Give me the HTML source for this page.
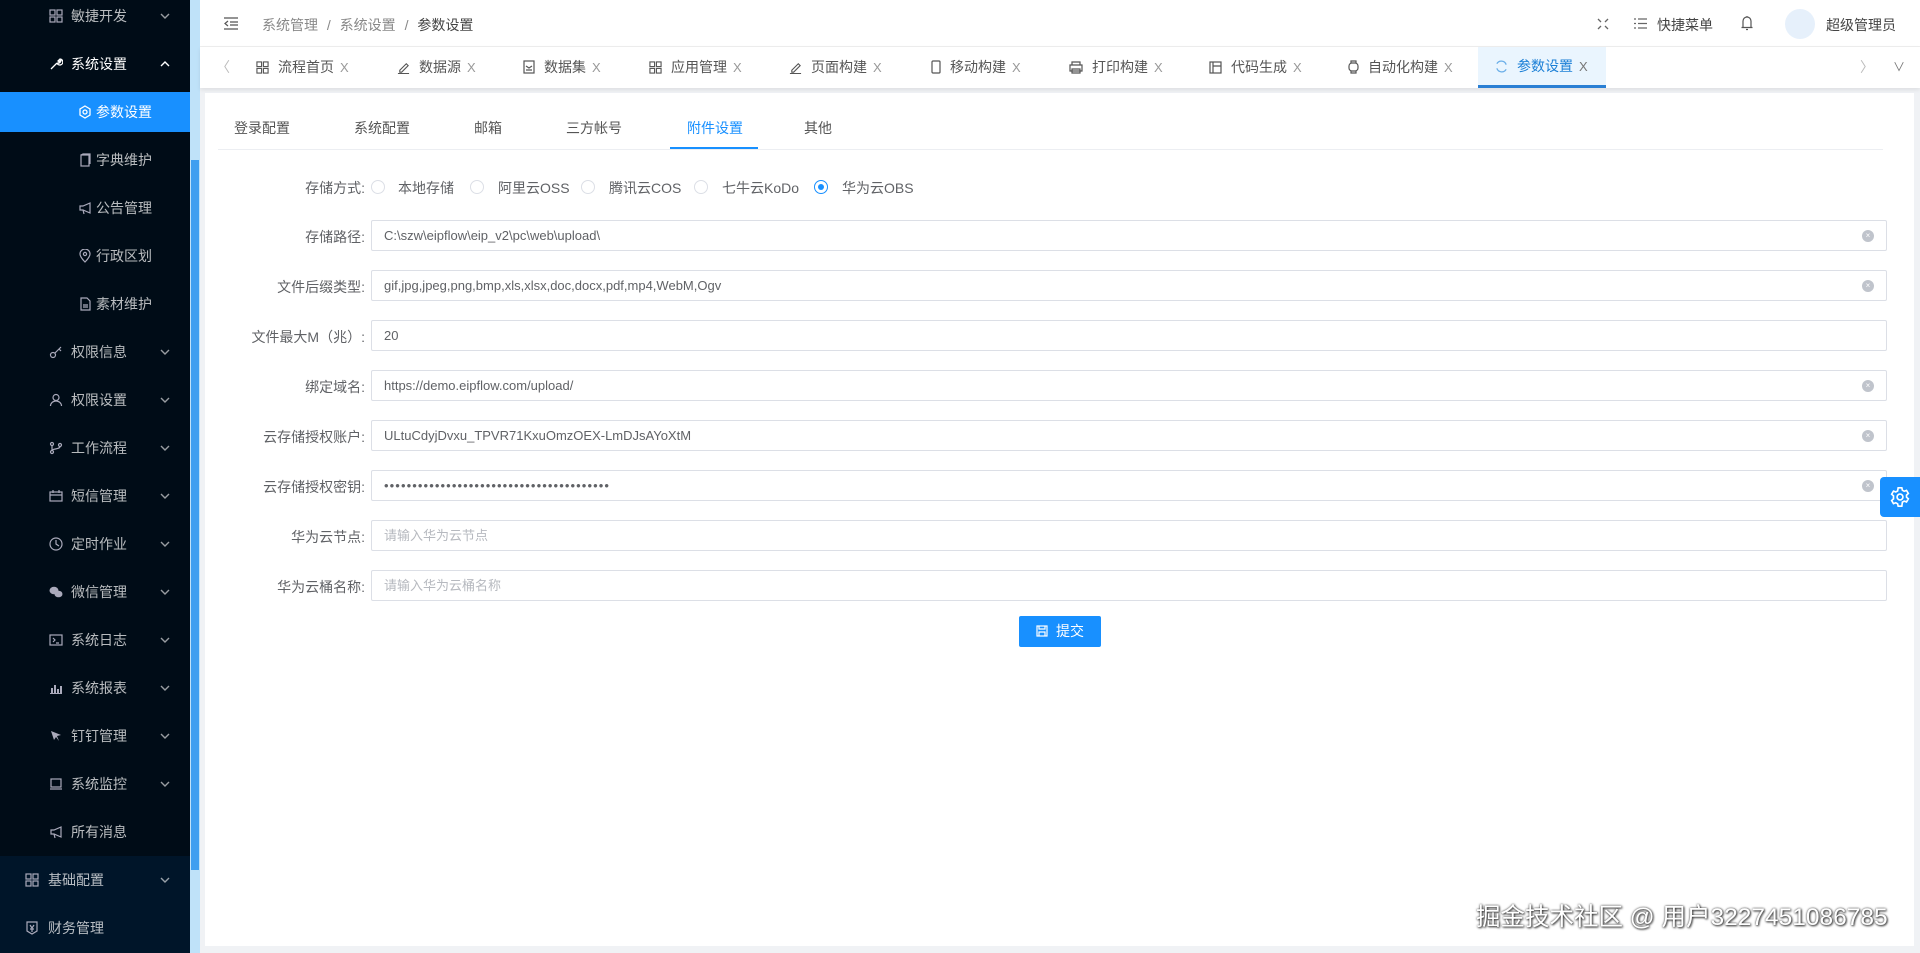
<!DOCTYPE html>
<html><head><meta charset="utf-8"><style>
*{box-sizing:border-box;margin:0;padding:0}
body{width:1920px;height:953px;overflow:hidden;background:#f0f2f5;font-family:"Liberation Sans","Noto Sans CJK SC",sans-serif;font-size:14px;color:#606266;position:relative}
.side{position:absolute;left:0;top:0;width:190px;height:953px;background:#001529;overflow:hidden}
.dark{position:absolute;left:0;top:0;width:190px;height:856px;background:#000c17}
.mi{position:absolute;left:0;width:190px;height:48px;line-height:48px;color:rgba(255,255,255,.72);font-size:14px}
.mi .ic{position:absolute;top:17px;width:14px;height:14px}
.mi .tx{position:absolute}
.mi .ar{position:absolute;left:160px;top:21px;width:10px;height:6px}
.act{background:#1890ff;color:#fff}
.sb{position:absolute;left:190px;top:0;width:10px;height:953px;background:#bfe2f9}
.sbt{position:absolute;left:191px;top:160px;width:8px;height:710px;background:#3f9ff0}
.hdr{position:absolute;left:200px;top:0;width:1720px;height:47px;background:#fff;border-bottom:1px solid #eee}
.tabs{position:absolute;left:200px;top:47px;width:1720px;height:41px;background:#fff;box-shadow:0 2px 4px rgba(0,0,0,.08)}
.tb{position:absolute;top:0;height:41px;line-height:41px;color:#555;font-size:14px;white-space:nowrap}
.tb .x{color:#999;margin-left:6px;font-size:13px}
.tb svg{vertical-align:-2px;margin-right:9px}
.card{position:absolute;left:205px;top:93px;width:1709px;height:853px;background:#fff}
.itab{position:absolute;top:118px;font-size:14px;color:#555}
.lbl{position:absolute;width:200px;left:165px;text-align:right;font-size:14px;color:#606266}
.inp{position:absolute;left:371px;width:1516px;height:31px;border:1px solid #dcdfe6;border-radius:2px;padding-left:12px;line-height:29px;font-size:13px;color:#606266;background:#fff}
.inp .cl{position:absolute;right:12px;top:9px;width:12px;height:12px;border-radius:50%;background:#c0c4cc;color:#fff;font-size:8px;line-height:12px;text-align:center;letter-spacing:0}
.ph{color:#b6b9bf}
.rd{position:absolute;top:180px;width:14px;height:14px;border:1px solid #dcdfe6;border-radius:50%}
.rt{position:absolute;top:178px;font-size:14px;color:#606266}
</style></head><body>
<svg width="0" height="0" style="position:absolute"><defs><symbol id="dn" viewBox="0 0 10 6"><path d="M1 1l4 4 4-4" fill="none" stroke="rgba(255,255,255,.6)" stroke-width="1.4"/></symbol><symbol id="up" viewBox="0 0 10 6"><path d="M1 5l4-4 4 4" fill="none" stroke="#fff" stroke-width="1.4"/></symbol></defs></svg>
<div class="side">
<div class="dark"></div>
<div class="mi" style="top:-8px"><svg class="ic" style="left:49px" viewBox="0 0 14 14" fill="none" stroke="#aab" stroke-width="1.2"><rect x="1" y="1" width="5" height="5"/><rect x="8" y="1" width="5" height="5"/><rect x="1" y="8" width="5" height="5"/><rect x="8" y="8" width="5" height="5"/></svg><span class="tx" style="left:71px">敏捷开发</span><svg class="ar"><use href="#dn"/></svg></div>
<div class="mi" style="top:40px;color:#fff"><svg class="ic" style="left:49px" viewBox="0 0 14 14" fill="none" stroke="#fff" stroke-width="1.3"><path d="M2 12l6-6M8 6a3 3 0 1 0 3-4l-2 2 1 1 2-2a3 3 0 0 1-4 3"/></svg><span class="tx" style="left:71px">系统设置</span><svg class="ar"><use href="#up"/></svg></div>
<div class="mi act" style="top:92px;height:40px;line-height:40px"><svg class="ic" style="left:78px;top:13px" viewBox="0 0 14 14" fill="none" stroke="#fff" stroke-width="1.3"><path d="M7 1l5 3v6l-5 3-5-3V4z"/><circle cx="7" cy="7" r="2"/></svg><span class="tx" style="left:96px">参数设置</span></div>
<div class="mi" style="top:136px"><svg class="ic" style="left:78px" viewBox="0 0 14 14" fill="none" stroke="#aab" stroke-width="1.2"><rect x="3" y="2" width="8" height="11"/><path d="M3 2l2-1h7v10"/></svg><span class="tx" style="left:96px">字典维护</span></div>
<div class="mi" style="top:184px"><svg class="ic" style="left:78px" viewBox="0 0 14 14" fill="none" stroke="#aab" stroke-width="1.2"><path d="M2 5h3l7-3v10l-7-3H2zM5 9l1 4"/></svg><span class="tx" style="left:96px">公告管理</span></div>
<div class="mi" style="top:232px"><svg class="ic" style="left:78px" viewBox="0 0 14 14" fill="none" stroke="#aab" stroke-width="1.2"><path d="M7 13s-5-5-5-8a5 5 0 0 1 10 0c0 3-5 8-5 8z"/><circle cx="7" cy="5" r="1.6"/></svg><span class="tx" style="left:96px">行政区划</span></div>
<div class="mi" style="top:280px"><svg class="ic" style="left:78px" viewBox="0 0 14 14" fill="none" stroke="#aab" stroke-width="1.2"><path d="M3 1h6l3 3v9H3zM5 8h5M5 10h5"/></svg><span class="tx" style="left:96px">素材维护</span></div>
<div class="mi" style="top:328px"><svg class="ic" style="left:49px" viewBox="0 0 14 14" fill="none" stroke="#aab" stroke-width="1.2"><circle cx="4" cy="10" r="2.5"/><path d="M6 8l6-6M10 4l2 2"/></svg><span class="tx" style="left:71px">权限信息</span><svg class="ar"><use href="#dn"/></svg></div>
<div class="mi" style="top:376px"><svg class="ic" style="left:49px" viewBox="0 0 14 14" fill="none" stroke="#aab" stroke-width="1.2"><circle cx="7" cy="4.5" r="3"/><path d="M1.5 13a5.5 5 0 0 1 11 0"/></svg><span class="tx" style="left:71px">权限设置</span><svg class="ar"><use href="#dn"/></svg></div>
<div class="mi" style="top:424px"><svg class="ic" style="left:49px" viewBox="0 0 14 14" fill="none" stroke="#aab" stroke-width="1.2"><circle cx="3" cy="3" r="1.5"/><circle cx="3" cy="11" r="1.5"/><circle cx="11" cy="4" r="1.5"/><path d="M3 4.5v5M11 5.5c0 3-8 2-8 4"/></svg><span class="tx" style="left:71px">工作流程</span><svg class="ar"><use href="#dn"/></svg></div>
<div class="mi" style="top:472px"><svg class="ic" style="left:49px" viewBox="0 0 14 14" fill="none" stroke="#aab" stroke-width="1.2"><rect x="1" y="3" width="12" height="9"/><path d="M4 1v3M10 1v3M1 6h12"/></svg><span class="tx" style="left:71px">短信管理</span><svg class="ar"><use href="#dn"/></svg></div>
<div class="mi" style="top:520px"><svg class="ic" style="left:49px" viewBox="0 0 14 14" fill="none" stroke="#aab" stroke-width="1.2"><circle cx="7" cy="7" r="6"/><path d="M7 3v4l3 2"/></svg><span class="tx" style="left:71px">定时作业</span><svg class="ar"><use href="#dn"/></svg></div>
<div class="mi" style="top:568px"><svg class="ic" style="left:49px" viewBox="0 0 14 14" fill="#aab"><ellipse cx="5" cy="5.5" rx="4.5" ry="3.8"/><ellipse cx="9.5" cy="9" rx="4" ry="3.3"/></svg><span class="tx" style="left:71px">微信管理</span><svg class="ar"><use href="#dn"/></svg></div>
<div class="mi" style="top:616px"><svg class="ic" style="left:49px" viewBox="0 0 14 14" fill="none" stroke="#aab" stroke-width="1.2"><rect x="1" y="2" width="12" height="10"/><path d="M4 5l2 2-2 2M7 10h3"/></svg><span class="tx" style="left:71px">系统日志</span><svg class="ar"><use href="#dn"/></svg></div>
<div class="mi" style="top:664px"><svg class="ic" style="left:49px" viewBox="0 0 14 14" fill="#aab"><rect x="1" y="12" width="12" height="1"/><rect x="2" y="7" width="2" height="5"/><rect x="5" y="4" width="2" height="8"/><rect x="8" y="8" width="2" height="4"/><rect x="11" y="5" width="2" height="7"/></svg><span class="tx" style="left:71px">系统报表</span><svg class="ar"><use href="#dn"/></svg></div>
<div class="mi" style="top:712px"><svg class="ic" style="left:49px" viewBox="0 0 14 14" fill="#aab"><path d="M2 2l10 4-4 1 2 5-3-4-2 3z"/></svg><span class="tx" style="left:71px">钉钉管理</span><svg class="ar"><use href="#dn"/></svg></div>
<div class="mi" style="top:760px"><svg class="ic" style="left:49px" viewBox="0 0 14 14" fill="none" stroke="#aab" stroke-width="1.2"><rect x="2" y="2" width="10" height="8"/><path d="M1 12h12"/></svg><span class="tx" style="left:71px">系统监控</span><svg class="ar"><use href="#dn"/></svg></div>
<div class="mi" style="top:808px"><svg class="ic" style="left:49px" viewBox="0 0 14 14" fill="none" stroke="#aab" stroke-width="1.2"><path d="M2 5h3l7-3v10l-7-3H2zM5 9l1 4"/></svg><span class="tx" style="left:71px">所有消息</span></div>
<div class="mi" style="top:856px"><svg class="ic" style="left:25px" viewBox="0 0 14 14" fill="none" stroke="#aab" stroke-width="1.2"><rect x="1" y="1" width="5" height="5"/><rect x="8" y="1" width="5" height="5"/><rect x="1" y="8" width="5" height="5"/><rect x="8" y="8" width="5" height="5"/></svg><span class="tx" style="left:48px">基础配置</span><svg class="ar"><use href="#dn"/></svg></div>
<div class="mi" style="top:904px"><svg class="ic" style="left:25px" viewBox="0 0 14 14" fill="none" stroke="#aab" stroke-width="1.2"><path d="M2 1h10v9l-5 3-5-3zM5 4l2 3 2-3M7 7v4M5 8h4"/></svg><span class="tx" style="left:48px">财务管理</span></div>
</div>
<div class="sb"></div><div class="sbt"></div>

<div class="hdr">
<svg style="position:absolute;left:24px;top:17px" width="14" height="13" viewBox="0 0 14 13" fill="none" stroke="#555" stroke-width="1.2"><path d="M0 1h14M6 5h8M6 8h8M0 12h14M4 4L1 6.5 4 9"/></svg>
<div style="position:absolute;left:62px;top:15px;font-size:14px;color:#888">系统管理 <span style="margin:0 5px">/</span> 系统设置 <span style="margin:0 5px">/</span> <span style="color:#444">参数设置</span></div>
<svg style="position:absolute;left:1397px;top:18px" width="12" height="12" viewBox="0 0 12 12" fill="none" stroke="#666" stroke-width="1.3"><path d="M1 1l3 3M11 1L8 4M1 11l3-3M11 11L8 8"/></svg>
<svg style="position:absolute;left:1434px;top:18px" width="13" height="11" viewBox="0 0 13 11" fill="none" stroke="#666" stroke-width="1.2"><path d="M0 1h2M4 1h9M0 5.5h2M4 5.5h9M0 10h2M4 10h9"/></svg>
<div style="position:absolute;left:1457px;top:15px;color:#444">快捷菜单</div>
<svg style="position:absolute;left:1541px;top:15px" width="12" height="16" viewBox="0 0 12 16" fill="none" stroke="#555" stroke-width="1.2"><path d="M2 12V6a4 4 0 0 1 8 0v6M0.5 12.5h11M6 1v1M5 14.5h2"/></svg>
<div style="position:absolute;left:1585px;top:9px;width:30px;height:30px;border-radius:50%;background:#e6f0fb"></div>
<div style="position:absolute;left:1626px;top:15px;color:#444">超级管理员</div>
</div>

<div class="tabs">
<div style="position:absolute;left:16px;top:0;line-height:41px;color:#bbb">〈</div>
<div class="tb" style="left:56px"><svg width="13" height="13" viewBox="0 0 14 14" fill="none" stroke="#555" stroke-width="1.2"><rect x="1" y="1" width="5" height="5"/><rect x="8" y="1" width="5" height="5"/><rect x="1" y="8" width="5" height="5"/><rect x="8" y="8" width="5" height="5"/></svg>流程首页<span class="x">X</span></div>
<div class="tb" style="left:197px"><svg width="13" height="13" viewBox="0 0 14 14" fill="none" stroke="#555" stroke-width="1.2"><path d="M3 10l7-7 2 2-7 7H3zM1 13.5h12"/></svg>数据源<span class="x">X</span></div>
<div class="tb" style="left:323px"><svg width="12" height="14" viewBox="0 0 12 14" fill="none" stroke="#555" stroke-width="1.2"><rect x="1" y="1" width="10" height="12"/><path d="M3 6l3 2 3-2M3 10h6"/></svg>数据集<span class="x">X</span></div>
<div class="tb" style="left:449px"><svg width="13" height="13" viewBox="0 0 14 14" fill="none" stroke="#555" stroke-width="1.2"><rect x="1" y="1" width="5" height="5"/><rect x="8" y="1" width="5" height="5"/><rect x="1" y="8" width="5" height="5"/><rect x="8" y="8" width="5" height="5"/></svg>应用管理<span class="x">X</span></div>
<div class="tb" style="left:589px"><svg width="13" height="13" viewBox="0 0 14 14" fill="none" stroke="#555" stroke-width="1.2"><path d="M3 10l7-7 2 2-7 7H3zM1 13.5h12"/></svg>页面构建<span class="x">X</span></div>
<div class="tb" style="left:731px"><svg width="10" height="14" viewBox="0 0 10 14" fill="none" stroke="#555" stroke-width="1.2"><rect x="1" y="1" width="8" height="12" rx="1"/></svg>移动构建<span class="x">X</span></div>
<div class="tb" style="left:869px"><svg width="14" height="13" viewBox="0 0 14 13" fill="none" stroke="#555" stroke-width="1.2"><path d="M3 4V1h8v3M1 4h12v6H1zM3 8h8v4H3z"/></svg>打印构建<span class="x">X</span></div>
<div class="tb" style="left:1009px"><svg width="13" height="13" viewBox="0 0 13 13" fill="none" stroke="#555" stroke-width="1.2"><rect x="1" y="1" width="11" height="11"/><path d="M4 1v11M4 5h8"/></svg>代码生成<span class="x">X</span></div>
<div class="tb" style="left:1148px"><svg width="11" height="14" viewBox="0 0 11 14" fill="none" stroke="#555" stroke-width="1.2"><rect x="1" y="3" width="9" height="8" rx="3"/><path d="M3 3V1h5v2M3 11v2h5v-2"/></svg>自动化构建<span class="x">X</span></div>
<div class="tb" style="left:1278px;width:128px;padding-left:17px;background:#eaf5fe;color:#1b7fd6;border-bottom:3px solid #2a7fd4;line-height:39px"><svg width="13" height="13" viewBox="0 0 14 14" fill="none" stroke="#6aaee8" stroke-width="1.4"><path d="M12 5A5.5 5.5 0 0 0 2 4M2 9a5.5 5.5 0 0 0 10 1"/></svg>参数设置<span class="x" style="color:#777">X</span></div>
<div style="position:absolute;left:1660px;top:0;line-height:41px;color:#bbb">〉</div>
<div style="position:absolute;left:1693px;top:0;line-height:41px;color:#777;font-size:12px">∨</div>
</div>

<div class="card"></div>
<div class="itab" style="left:234px">登录配置</div>
<div class="itab" style="left:354px">系统配置</div>
<div class="itab" style="left:474px">邮箱</div>
<div class="itab" style="left:566px">三方帐号</div>
<div class="itab" style="left:687px;color:#1890ff">附件设置</div>
<div class="itab" style="left:804px">其他</div>
<div style="position:absolute;left:218px;top:149px;width:1665px;height:1px;background:#eceef2"></div>
<div style="position:absolute;left:670px;top:147px;width:88px;height:2px;background:#1890ff"></div>

<div class="lbl" style="top:178px">存储方式:</div>
<div class="rd" style="left:371px"></div><div class="rt" style="left:398px">本地存储</div>
<div class="rd" style="left:470px"></div><div class="rt" style="left:498px">阿里云OSS</div>
<div class="rd" style="left:581px"></div><div class="rt" style="left:609px">腾讯云COS</div>
<div class="rd" style="left:694px"></div><div class="rt" style="left:722px">七牛云KoDo</div>
<div class="rd" style="left:814px;border-color:#1890ff"><div style="position:absolute;left:3px;top:3px;width:6px;height:6px;border-radius:50%;background:#1890ff"></div></div><div class="rt" style="left:842px">华为云OBS</div>

<div class="lbl" style="top:227px">存储路径:</div>
<div class="inp" style="top:220px">C:\szw\eipflow\eip_v2\pc\web\upload\<span class="cl">×</span></div>
<div class="lbl" style="top:277px">文件后缀类型:</div>
<div class="inp" style="top:270px">gif,jpg,jpeg,png,bmp,xls,xlsx,doc,docx,pdf,mp4,WebM,Ogv<span class="cl">×</span></div>
<div class="lbl" style="top:327px">文件最大M（兆）:</div>
<div class="inp" style="top:320px">20</div>
<div class="lbl" style="top:377px">绑定域名:</div>
<div class="inp" style="top:370px">https://demo.eipflow.com/upload/<span class="cl">×</span></div>
<div class="lbl" style="top:427px">云存储授权账户:</div>
<div class="inp" style="top:420px">ULtuCdyjDvxu_TPVR71KxuOmzOEX-LmDJsAYoXtM<span class="cl">×</span></div>
<div class="lbl" style="top:477px">云存储授权密钥:</div>
<div class="inp" style="top:470px;letter-spacing:1.1px">••••••••••••••••••••••••••••••••••••••••<span class="cl">×</span></div>
<div class="lbl" style="top:527px">华为云节点:</div>
<div class="inp ph" style="top:520px">请输入华为云节点</div>
<div class="lbl" style="top:577px">华为云桶名称:</div>
<div class="inp ph" style="top:570px">请输入华为云桶名称</div>

<div style="position:absolute;left:1019px;top:616px;width:82px;height:31px;background:#1890ff;border-radius:2px;color:#fff;font-size:14px;line-height:31px;text-align:center"><svg width="12" height="12" viewBox="0 0 12 12" fill="none" stroke="#fff" stroke-width="1.2" style="vertical-align:-1px;margin-right:8px"><rect x="1" y="1" width="10" height="10"/><path d="M3 1v3h6V1M3 11V7h6v4"/></svg>提交</div>

<div style="position:absolute;left:1880px;top:477px;width:40px;height:40px;background:#1890ff;border-radius:4px 0 0 4px"><svg style="position:absolute;left:9px;top:9px" width="22" height="22" viewBox="0 0 24 24" fill="none" stroke="#fff" stroke-width="1.8"><path d="M10 2h4l.6 2.6 2 1.1 2.5-.9 2 3.4-2 1.8v2.2l2 1.8-2 3.4-2.5-.9-2 1.1L14 22h-4l-.6-2.6-2-1.1-2.5.9-2-3.4 2-1.8V10.8l-2-1.8 2-3.4 2.5.9 2-1.1z"/><circle cx="12" cy="12" r="3.2"/></svg></div>

<div style="position:absolute;left:1476px;top:898px;font-size:24.5px;color:#fff;text-shadow:0 0 2px #333,1px 1px 2px #333;white-space:nowrap">掘金技术社区 @ 用户3227451086785</div>
</body></html>
